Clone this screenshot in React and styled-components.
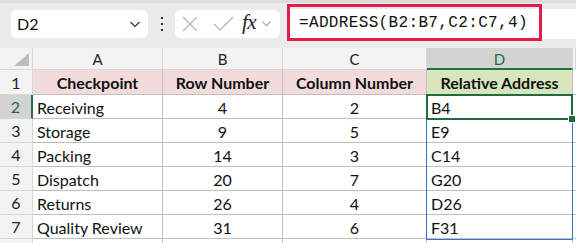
import styled, { createGlobalStyle } from "styled-components"

const Global = createGlobalStyle`
  body { margin: 0; background: #fff; overflow: hidden; }
  * { box-sizing: border-box; }
`

const cols = [130, 120, 144, 146]
const header = ["Checkpoint", "Row Number", "Column Number", "Relative Address"]
const rows = [
  ["Receiving", 4, 2, "B4"],
  ["Storage", 9, 5, "E9"],
  ["Packing", 14, 3, "C14"],
  ["Dispatch", 20, 7, "G20"],
  ["Returns", 26, 4, "D26"],
  ["Quality Review", 31, 6, "F31"],
]

const Page = styled.div`
  width: 576px;
  height: 243px;
  overflow: hidden;
  font-family: Lato, "Open Sans", sans-serif;
  color: #111;
`

const TopBand = styled.div`
  height: 3px;
  background: #dcdcdc;
`

const FormulaBar = styled.div`
  height: 45px;
  background: #ebebeb;
  display: flex;
  align-items: center;
  padding: 0 0 4px 11px;
  position: relative;
`

const NameBox = styled.div`
  width: 137px;
  height: 28px;
  background: #fff;
  border-radius: 6px;
  display: flex;
  align-items: center;
  justify-content: space-between;
  padding: 0 7px 0 6px;
  font-size: 16px;
  color: #111;
`

const Dots = styled.div`
  width: 27px;
  display: flex;
  flex-direction: column;
  align-items: center;
  gap: 4px;
  span { width: 2px; height: 2px; background: #333; }
`

const FxBox = styled.div`
  width: 105px;
  height: 28px;
  background: #fff;
  border-radius: 6px;
  display: flex;
  align-items: center;
  padding: 0 4px 0 5px;
`

const Fx = styled.span`
  font-family: "Liberation Serif", "DejaVu Serif", serif;
  font-style: italic;
  font-size: 21px;
  color: #222;
  margin: 0 5px 2px 6px;
  letter-spacing: -0.5px;
`

const Input = styled.div`
  flex: 1;
  height: 30px;
  margin-left: 7px;
  background: #fff;
  border-radius: 5px 0 0 5px;
  position: relative;
`

const Highlight = styled.div`
  position: absolute;
  left: 0;
  top: -5px;
  width: 255px;
  height: 37px;
  border: 3px solid #e11d48;
  font-family: "Liberation Mono", monospace;
  font-size: 16px;
  color: #111;
  display: flex;
  align-items: center;
  padding-left: 9px;
  padding-top: 1px;
  letter-spacing: 0.35px;
`

const Grid = styled.div`
  display: grid;
  grid-template-columns: 33px ${cols.map((c) => c + "px").join(" ")} 3px;
  grid-template-rows: 22px 25px repeat(6, 24px) 24px;
  position: relative;
`

const Corner = styled.div`
  background: #f3f3f3;
  border-right: 1px solid #d6d6d6;
  border-bottom: 1px solid #d6d6d6;
  position: relative;
  &::after {
    content: "";
    position: absolute;
    right: 3px;
    bottom: 3px;
    border-left: 15px solid transparent;
    border-bottom: 13px solid #bdbdbd;
  }
`

const ColHead = styled.div`
  background: ${(p) => (p.$active ? "#d3d3d3" : "#f3f3f3")};
  border-right: 1px solid #d6d6d6;
  border-bottom: ${(p) => (p.$active ? "2px solid #217346" : "1px solid #d6d6d6")};
  color: ${(p) => (p.$active ? "#1e6b41" : "#222")};
  font-size: 15px;
  display: flex;
  align-items: center;
  justify-content: center;
  padding-top: 1px;
`

const RowHead = styled.div`
  background: ${(p) => (p.$active ? "#d3d3d3" : "#f3f3f3")};
  border-right: ${(p) => (p.$active ? "2px solid #217346" : "1px solid #d6d6d6")};
  border-bottom: 1px solid #d6d6d6;
  color: ${(p) => (p.$active ? "#1e6b41" : "#222")};
  font-size: 16px;
  display: flex;
  align-items: center;
  justify-content: center;
`

const Cell = styled.div`
  background: ${(p) => p.$bg || "#fff"};
  border-right: 1px solid #bfbfbf;
  border-bottom: 1px solid #bfbfbf;
  font-size: 16px;
  font-weight: ${(p) => (p.$bold ? 700 : 400)};
  display: flex;
  align-items: center;
  justify-content: ${(p) => (p.$center ? "center" : "flex-start")};
  padding: 1px 4px 0;
  white-space: nowrap;
  color: #111;
`

const Range = styled.div`
  position: absolute;
  left: 426px;
  top: 46px;
  width: 147px;
  height: 146px;
  border: 1px solid #3a6fcf;
  pointer-events: none;
`

const Active = styled.div`
  position: absolute;
  left: 426px;
  top: 46px;
  width: 147px;
  height: 26px;
  border: 2px solid #1f6b3f;
  &::after {
    content: "";
    position: absolute;
    right: -5px;
    bottom: -5px;
    width: 6px;
    height: 6px;
    background: #1f6b3f;
    border: 1px solid #fff;
  }
`

const Chevron = ({ color = "#333", size = 12 }) => (
  <svg width={size} height={size} viewBox="0 0 12 12">
    <path d="M1.5 4 L6 8.5 L10.5 4" fill="none" stroke={color} strokeWidth="1.2" />
  </svg>
)

export default function App() {
  return (
    <Page>
      <Global />
      <TopBand />
      <FormulaBar>
        <NameBox>
          <span>D2</span>
          <Chevron />
        </NameBox>
        <Dots>
          <span />
          <span />
          <span />
        </Dots>
        <FxBox>
          <svg width="20" height="20" viewBox="0 0 20 20">
            <path d="M3 3 L17 17 M17 3 L3 17" stroke="#b5b5b5" strokeWidth="1.3" fill="none" />
          </svg>
          <svg width="24" height="20" viewBox="0 0 24 20" style={{ marginLeft: 12 }}>
            <path d="M2 10 L8 16 L21 3" stroke="#b5b5b5" strokeWidth="1.3" fill="none" />
          </svg>
          <Fx>fx</Fx>
          <Chevron color="#9a9a9a" size={11} />
        </FxBox>
        <Input>
          <Highlight>=ADDRESS(B2:B7,C2:C7,4)</Highlight>
        </Input>
      </FormulaBar>
      <Grid>
        <Corner />
        {["A", "B", "C", "D"].map((l) => (
          <ColHead key={l} $active={l === "D"}>
            {l}
          </ColHead>
        ))}
        <ColHead />
        <RowHead>1</RowHead>
        {header.map((h, i) => (
          <Cell key={h} $bold $center $bg={i === 3 ? "#d8e4bc" : "#f2dcdb"}>
            {h}
          </Cell>
        ))}
        <Cell />
        {rows.map((r, ri) => [
          <RowHead key={"h" + ri} $active={ri === 0}>
            {ri + 2}
          </RowHead>,
          ...r.map((v, ci) => (
            <Cell key={ri + "-" + ci} $center={ci === 1 || ci === 2}>
              {v}
            </Cell>
          )),
          <Cell key={"e" + ri} />,
        ])}
        <RowHead />
        <Cell />
        <Cell />
        <Cell />
        <Cell />
        <Cell />
        <Range />
        <Active />
      </Grid>
    </Page>
  )
}
